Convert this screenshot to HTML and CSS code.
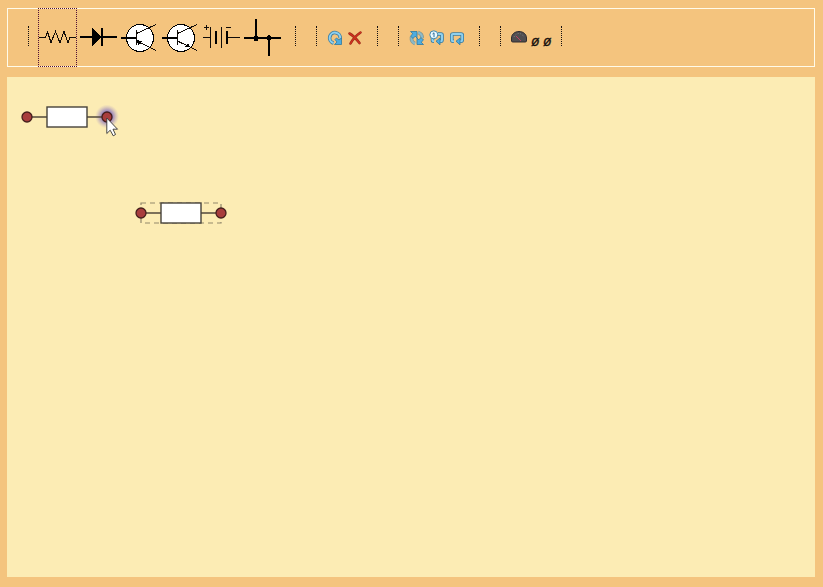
FILE: index.html
```html
<!DOCTYPE html>
<html lang="en">
<head>
<meta charset="utf-8">
<title>Circuit editor</title>
<link rel="stylesheet" href="styles.css">
</head>
<body>
<div class="toolbar">
  <div class="group parts">
    <button class="part selected" aria-label="Resistor"><svg width="37" height="58" viewBox="0 0 37 58"><path class="thin" d="M0 28.5H6.5L8.5 23L12 33.5L16.500 22.500L21 34L25 22.500L29 34L31 28.500H37"/></svg></button>
    <button class="part" aria-label="Diode"><svg width="37" height="58" viewBox="0 0 37 58"><path class="thick" d="M0 28H37M22 19V37"/><path d="M12 18.500L22 28L12 37.500Z"/></svg></button>
    <button class="part" aria-label="PNP transistor"><svg width="37" height="58" viewBox="0 0 37 58"><circle cx="19" cy="29" r="13.500" fill="#fff" stroke="#000"/><path class="thick" d="M0 29H15"/><path class="thin" d="M15.500 21V36M15.500 24.500L35 15.500M15.500 32L35 41.500"/><path d="M15 31L21 32L17.500 36Z"/></svg></button>
    <button class="part" aria-label="NPN transistor"><svg width="37" height="58" viewBox="0 0 37 58"><circle cx="19" cy="29" r="13.500" fill="#fff" stroke="#000"/><path class="thick" d="M0 29H15"/><path class="thin" d="M15.500 21V36M15.500 24.500L35 15.500M15.500 32L35 41.500"/><path d="M26 34L28 38L22.500 38Z"/></svg></button>
    <button class="part" aria-label="Battery"><svg width="37" height="58" viewBox="0 0 37 58"><path class="thin" d="M0 28.500H7.500M7.500 18V39M18.500 18V39M25 28.500H37M1 18.500H6M3.500 16V21M23 18.500H28"/><path d="M12 22h2v13h-2zM23 22h2v13h-2z"/></svg></button>
    <button class="part" aria-label="Junction"><svg width="37" height="58" viewBox="0 0 37 58"><path class="thick" d="M0 29H37M12 10V29M25 29V47"/><circle cx="12" cy="29.500" r="2.600"/><circle cx="25" cy="29" r="2.600"/></svg></button>
  </div>
  <div class="group edit">
    <svg width="16" height="16" viewBox="0 0 16 16"><path class="edge" d="M6.500 13A5.300 5.300 0 1 1 13.200 8.500"/><path class="ring" d="M6.500 13A5.300 5.300 0 1 1 13.200 8.500"/><path class="arrow" d="M14.500 8V14.500H7.500L10 12L8 9.500L9.500 8L12 10Z"/></svg>
    <svg width="16" height="16" viewBox="0 0 16 16"><path class="cross-edge" d="M2.500 3.500Q7 6 12.500 13M13.500 2.500Q7 7 3.500 13.500"/><path class="cross" d="M2.500 3.500Q7 6 12.500 13M13.500 2.500Q7 7 3.500 13.500"/></svg>
  </div>
  <div class="group run">
    <svg width="16" height="16" viewBox="0 0 16 16"><path class="edge faded" d="M2.500 7Q2 12 6 13.500M9 2.500Q13.500 4 13 8"/><path class="ring faded" d="M2.500 7Q2 12 6 13.500M9 2.500Q13.500 4 13 8"/><path class="arrow" d="M1.500 1.500H8V8L6.200 6.200L4 8.500L1.500 6L3.800 3.800Z"/><path class="arrow" d="M14.500 14.500H8V8L9.800 9.800L12 7.500L14.500 10L12.200 12.200Z"/></svg>
    <svg width="16" height="16" viewBox="0 0 16 16"><path class="edge" d="M9 4H12Q13 4 13 5V10Q13 11.200 12 11.200H10M3.500 8V10.500Q3.500 11.200 5 11.200"/><path class="ring" d="M9 4H12Q13 4 13 5V10Q13 11.200 12 11.200H10M3.500 8V10.500Q3.500 11.200 5 11.200"/><path class="arrow" d="M11 8V14.800L7 11.200Z"/><circle cx="4.800" cy="4.800" r="4" fill="#eefaff" stroke="#3d87ae"/><path d="M3.500 4L5 2.800V7.200" fill="none" stroke="#286b96"/></svg>
    <svg width="16" height="16" viewBox="0 0 16 16"><path class="edge" d="M5 11.200H4Q2.800 11.200 2.800 10V5Q2.800 4 4 4H12Q13.200 4 13.200 5V10Q13.200 11.200 12 11.200H10.500"/><path class="ring" d="M5 11.200H4Q2.800 11.200 2.800 10V5Q2.800 4 4 4H12Q13.200 4 13.200 5V10Q13.200 11.200 12 11.200H10.500"/><path class="arrow" d="M11 8V14.800L7 11.200Z"/></svg>
  </div>
  <div class="group meters">
    <svg width="16" height="16" viewBox="0 0 16 16"><path d="M.5 11V8C.5 4 4 1.500 8 1.500S15.500 4 15.500 8V11Q15.500 12 14 12H2Q.5 12 .5 11Z" fill="#504e50" stroke="#302d30"/><path d="M3 7Q5 3.500 8 3.500T13 7" fill="none" stroke="#858589" stroke-dasharray="1 1.500"/><path d="M5 6L10 11" stroke="#bd4265"/></svg>
    <span class="zero">ø</span>
    <span class="zero">ø</span>
  </div>
</div>
<main class="canvas">
  <svg class="node first" width="100" height="50" viewBox="0 0 100 50">
    <defs><radialGradient id="glow"><stop offset=".35" stop-color="#6756bd" stop-opacity=".85"/><stop offset=".65" stop-color="#8d77bf" stop-opacity=".5"/><stop offset="1" stop-color="#b7a4c4" stop-opacity="0"/></radialGradient></defs>
    <circle cx="87" cy="20.500" r="12" fill="url(#glow)"/>
    <path class="lead" d="M7 21H27M67 21H87"/><rect class="box" x="27" y="11" width="40" height="20"/>
    <circle class="pin" cx="7" cy="21" r="5"/><circle class="pin" cx="87" cy="21" r="5"/>
  </svg>
  <svg class="node second" width="100" height="40" viewBox="0 0 100 40">
    <rect class="outline" x="7" y="10" width="80" height="20"/>
    <path class="lead" d="M7 20H27M67 20H87"/><rect class="box" x="27" y="10" width="40" height="20"/>
    <circle class="pin" cx="7" cy="20" r="5"/><circle class="pin" cx="87" cy="20" r="5"/>
  </svg>
  <svg class="cursor" width="13" height="20" viewBox="0 0 13 20"><path d="M.8 1V16.500L4.200 13.200L7.200 18.800L9.500 17.500L7 12.200H11.500Z" fill="#fff" stroke="#333" stroke-width=".9"/></svg>
</main>
</body>
</html>
```

FILE: styles.css
```css
body {
  margin: 0;
  padding: 8px 8px 10px 7px;
  box-sizing: border-box;
  height: 587px;
  background: #f4c47e;
  display: flex;
  flex-direction: column;
  gap: 10px;
  overflow: hidden;
}

.toolbar {
  box-sizing: border-box;
  height: 59px;
  flex: none;
  border: 1px solid #fffbe9;
  padding-left: 20px;
  display: flex;
  align-items: center;
  gap: 20px;
}

.group {
  box-sizing: border-box;
  height: 20px;
  margin-bottom: 3px;
  border: 0 dotted #151010;
  border-width: 0 1px;
  padding: 3px 14px 0 10px;
  display: flex;
  align-items: center;
  gap: 4px;
}

.group svg {
  display: block;
  flex: none;
}

.group.parts {
  padding: 3px 13px 0 9px;
  gap: 2px;
}

.group.meters {
  padding-right: 10px;
}

.part {
  box-sizing: border-box;
  width: 39px;
  height: 59px;
  flex: none;
  padding: 0;
  border: 1px solid transparent;
  background: none;
  overflow: hidden;
}

.part svg {
  shape-rendering: crispEdges;
}

.part.selected {
  border: 1px dotted #501038;
}

.thin {
  fill: none;
  stroke: #110c08;
}

.thick {
  fill: none;
  stroke: #000;
  stroke-width: 2;
}

.edge {
  fill: none;
  stroke: #397ca2;
  stroke-width: 3.600;
}

.ring {
  fill: none;
  stroke: #8ed0ef;
  stroke-width: 2;
}

.faded {
  opacity: .6;
}

.arrow {
  fill: #4eace0;
  stroke: #2e789f;
  stroke-width: .8;
}

.cross-edge {
  fill: none;
  stroke: #9b2c1a;
  stroke-width: 2.600;
  stroke-linecap: round;
}

.cross {
  fill: none;
  stroke: #d2301e;
  stroke-width: 1.400;
  stroke-linecap: round;
}

.zero {
  width: 8px;
  font: italic 14px/16px "Liberation Sans", sans-serif;
  -webkit-text-stroke: .3px #17110d;
  color: #17110d;
  position: relative;
  top: 3px;
}

.canvas {
  flex: 1;
  background: #fcecb4;
  position: relative;
}

.node,
.cursor {
  position: absolute;
}

.first {
  left: 13px;
  top: 19px;
}

.second {
  left: 127px;
  top: 116px;
}

.cursor {
  left: 99px;
  top: 40px;
}

.lead {
  stroke: #51483b;
  stroke-width: 1.400;
}

.box {
  fill: #fff;
  stroke: #47423a;
  stroke-width: 1.400;
}

.pin {
  fill: #a83d3d;
  stroke: #461e1c;
  stroke-width: 1.300;
}

.outline {
  fill: none;
  stroke: #91876b;
  stroke-width: 1.200;
  stroke-dasharray: 5 4;
}
```
